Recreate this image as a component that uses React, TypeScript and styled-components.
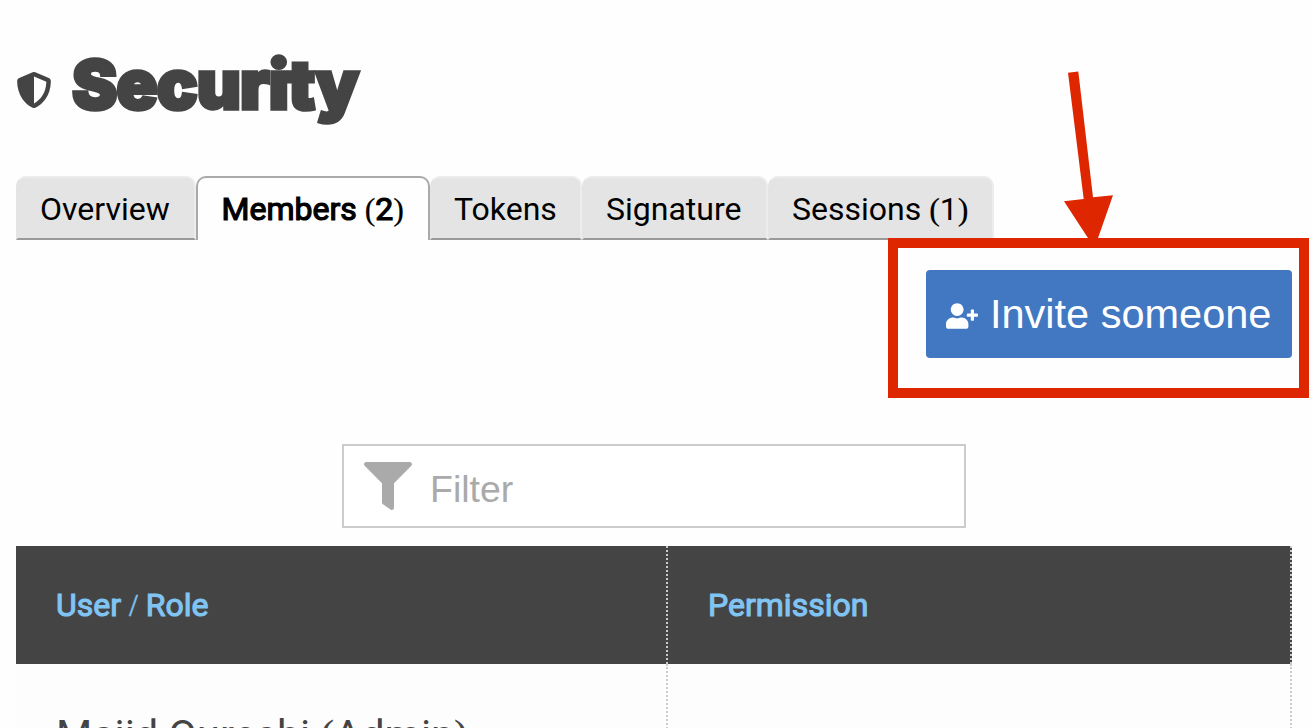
import React from "react";
import styled, { createGlobalStyle } from "styled-components";
import { FaFilter, FaShieldAlt, FaUserPlus } from "react-icons/fa";

const GlobalStyle = createGlobalStyle`
  * { box-sizing: border-box; }
  body {
    margin: 0;
    background: #fefefe;
    overflow: hidden;
  }
`;

const Page = styled.main`
  position: relative;
  width: 1312px;
  height: 728px;
  padding: 0 20px 0 16px;
  overflow: hidden;
  display: flex;
  flex-direction: column;
  font-family: Roboto, "Liberation Sans", sans-serif;
  color: #444;
`;

const TitleBar = styled.header`
  display: flex;
  flex: none;
  align-items: center;
  gap: 20px;
  height: 176px;
  padding-top: 4px;
  white-space: nowrap;
  svg { flex: none; }
`;

const Title = styled.h1`
  margin: -12px 0 0;
  font-family: Inter, Roboto, sans-serif;
  font-size: 68px;
  line-height: 80px;
  font-weight: 900;
  letter-spacing: -0.9px;
  -webkit-text-stroke: 3.5px #444;
`;

const Tabs = styled.nav`
  display: flex;
  height: 64px;
  flex: none;
`;

const Tab = styled.div<{ $width: number; $active?: boolean }>`
  flex: none;
  width: ${(p) => p.$width}px;
  padding-left: ${(p) => (p.$active ? 23.5 : 22)}px;
  border: 2px solid ${(p) => (p.$active ? "#aaa" : "#ececec")};
  border-left-color: ${(p) => (p.$active ? "#aaa" : "#e4e4e4")};
  border-bottom: ${(p) => (p.$active ? "0" : "2px solid #999")};
  border-radius: 10px 10px 0 0;
  background: ${(p) => (p.$active ? "#fefefe" : "#e4e4e4")};
  color: #000;
  font-size: 32px;
  line-height: 62px;
  white-space: nowrap;
  -webkit-text-stroke: ${(p) => (p.$active ? "1.2px #000" : "0")};
`;

const Serif = styled.span`
  font-family: "Liberation Serif", serif;
  -webkit-text-stroke-width: 0.2px;
`;

const Actions = styled.div`
  display: flex;
  justify-content: flex-end;
  padding-top: 30px;
  height: 204px;
  flex: none;
`;

const InviteButton = styled.button`
  display: flex;
  align-items: center;
  gap: 12px;
  width: 366px;
  height: 88px;
  padding: 0 0 0 20px;
  border: 0;
  border-radius: 4px;
  background: #4278c2;
  color: #fff;
  font-family: "Liberation Sans", Arial, sans-serif;
  font-size: 41.5px;
  white-space: nowrap;
  svg { flex: none; margin-top: 4px; }
`;

const FilterBox = styled.div`
  display: flex;
  align-items: center;
  gap: 18px;
  flex: none;
  align-self: flex-start;
  width: 624px;
  height: 84px;
  margin: 0 0 18px 326px;
  padding-left: 20px;
  border: 2px solid #ccc;
  background: #fff;
  color: #aaa;
  font-family: "Liberation Sans", Arial, sans-serif;
  font-size: 37.5px;
`;

const FilterLabel = styled.span`
  padding-top: 6px;
`;

const Row = styled.div<{ $head?: boolean }>`
  display: grid;
  grid-template-columns: 652px 624px;
  flex: none;
  height: ${(p) => (p.$head ? 118 : 160)}px;
  background: ${(p) => (p.$head ? "#444" : "#fdfdfd")};
`;

const HeadCell = styled.div`
  padding-left: 40px;
  border-right: 2px dotted #ccc;
  color: #80c4f4;
  font-size: 32px;
  line-height: 118px;
  -webkit-text-stroke: 1.1px #80c4f4;
  white-space: nowrap;
`;

const Slash = styled(Serif)`
  -webkit-text-stroke: 0.4px #80c4f4;
`;

const Cell = styled.div`
  padding: 43px 0 0 40px;
  border-right: 2px dotted #ccc;
  font-size: 41.5px;
  line-height: 56px;
  white-space: nowrap;
`;

const Highlight = styled.div`
  position: absolute;
  left: 888px;
  top: 238px;
  width: 421px;
  height: 160px;
  border: 10px solid #de2600;
`;

const Arrow = styled.svg`
  position: absolute;
  left: 1060px;
  top: 68px;
`;

export default function App() {
  return (
    <>
      <GlobalStyle />
      <Page>
        <TitleBar>
          <FaShieldAlt size={36} />
          <Title>Security</Title>
        </TitleBar>
        <Tabs>
          <Tab $width={180}>Overview</Tab>
          <Tab $width={234} $active>
            Members <Serif>(</Serif>2<Serif>)</Serif>
          </Tab>
          <Tab $width={152}>Tokens</Tab>
          <Tab $width={186}>Signature</Tab>
          <Tab $width={226}>
            Sessions <Serif>(</Serif>1<Serif>)</Serif>
          </Tab>
        </Tabs>
        <Actions>
          <InviteButton>
            <FaUserPlus size={32} />
            Invite someone
          </InviteButton>
        </Actions>
        <FilterBox>
          <FaFilter size={48} />
          <FilterLabel>Filter</FilterLabel>
        </FilterBox>
        <Row $head>
          <HeadCell>
            User <Slash>/</Slash> Role
          </HeadCell>
          <HeadCell>Permission</HeadCell>
        </Row>
        <Row>
          <Cell>
            Majid Qureshi <Serif>(</Serif>Admin<Serif>)</Serif>
          </Cell>
          <Cell />
        </Row>
        <Highlight />
        <Arrow width="60" height="182" viewBox="1060 68 60 182">
          <path
            d="M1068 72.7L1078.3 71.5L1093 197.3L1113 195.3L1094.5 248L1064 201.2L1083.7 199Z"
            fill="#de2600"
          />
        </Arrow>
      </Page>
    </>
  );
}
